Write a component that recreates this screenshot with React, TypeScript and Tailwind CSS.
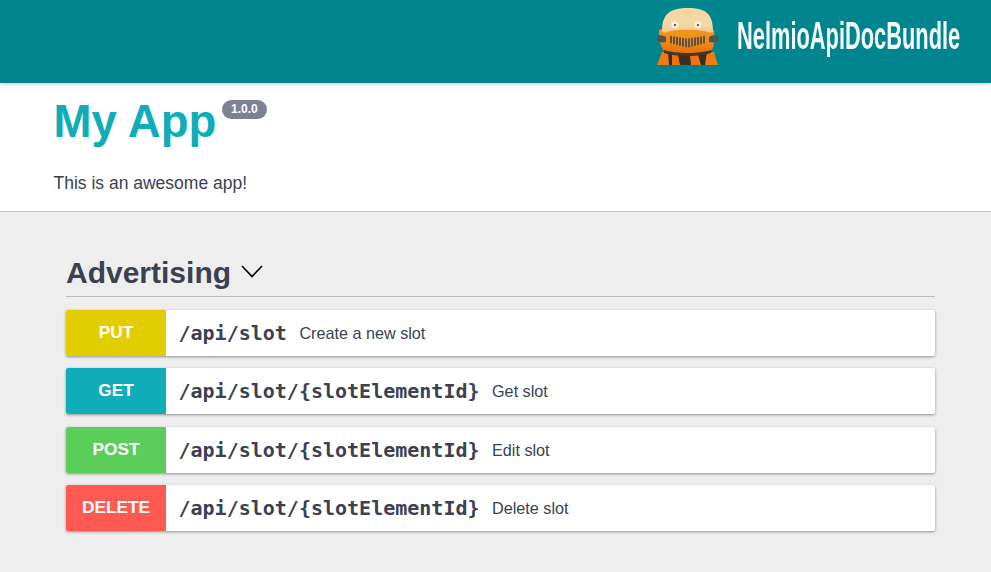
const rows = [
  { m: "PUT", c: "bg-[#e2cd00]", p: "/api/slot", d: "Create a new slot" },
  { m: "GET", c: "bg-[#10acb8]", p: "/api/slot/{slotElementId}", d: "Get slot" },
  { m: "POST", c: "bg-[#5bcd5b]", p: "/api/slot/{slotElementId}", d: "Edit slot" },
  { m: "DELETE", c: "bg-[#ff5a52]", p: "/api/slot/{slotElementId}", d: "Delete slot" },
];

function Mascot() {
  return (
    <svg width="64" height="62" viewBox="0 0 64 62" className="block blur-[0.4px]">
      <defs>
        <linearGradient id="head" x1="0" y1="0" x2="0" y2="1">
          <stop offset="0" stopColor="#f6d8a2" />
          <stop offset="0.7" stopColor="#f5d6a6" />
          <stop offset="1" stopColor="#efc384" />
        </linearGradient>
        <linearGradient id="body" x1="0" y1="0" x2="0" y2="1">
          <stop offset="0" stopColor="#f59a20" />
          <stop offset="0.6" stopColor="#f08a14" />
          <stop offset="1" stopColor="#e66f0a" />
        </linearGradient>
      </defs>
      <path d="M8 46 H56 L57 60 H7 Z" fill="#3a2e24" />
      <path d="M1 60 L6 47 H12 L13 60 Z" fill="#f47a10" />
      <path d="M16 50 H22 L24 60 H16 Z" fill="#f0720c" />
      <path d="M34 50 H42 L45 60 H35 Z" fill="#f0720c" />
      <path d="M51 47 H58 L62 60 H49 Z" fill="#f47a10" />
      <path d="M3 25 C3 36 5 42 8 46 C20 50 44 50 55 46 C58 42 59 36 58 25 C46 19 16 19 3 25 Z" fill="url(#body)" />
      <path d="M8 45 C20 49 44 49 55 45 L55 48 C44 52 20 52 8 48 Z" fill="#4a3524" />
      <path d="M1 31 C3 30 7 30 10 32 V37 C7 38 3 37 1 36 Z" fill="#55524e" />
      <path d="M62 31 C60 30 56 30 53 32 V37 C57 38 60 37 62 36 Z" fill="#55524e" />
      <path d="M6 26 C6 9 14 3 32 3 C50 3 57 9 57 26 C57 28 54 28 52 27 C42 24 20 24 11 27 C9 28 6 28 6 26 Z" fill="url(#head)" />
      <circle cx="19" cy="20" r="3.4" fill="#faf1e4" />
      <circle cx="19" cy="20" r="1.2" fill="#6a6058" />
      <circle cx="42" cy="20" r="3.4" fill="#faf1e4" />
      <circle cx="42" cy="20" r="1.2" fill="#6a6058" />
      {[14, 17, 20, 23, 26, 29, 32, 35, 38, 41, 44, 47].map((x, i) => {
        const dip = 5 - Math.abs(i - 5.5);
        return <rect key={i} x={x} y={31 + dip * 0.5} width="2" height={8 + dip * 0.3} rx="1" fill="#5e5248" />;
      })}
    </svg>
  );
}

export default function App() {
  return (
    <div className="min-h-[572px] bg-[#eeeeee] font-['Liberation_Sans',Arial,sans-serif] text-[#3b4151] overflow-hidden">
      <header className="h-[83px] bg-[#00858f] flex items-start pl-[656px] pt-[5px] gap-[17px] shadow-[0_1px_3px_rgba(0,0,0,0.25)] relative">
        <Mascot />
        <span className="font-bold text-[39px] leading-[50px] mt-[6px] text-[#f2fafa] inline-block w-[224px] whitespace-nowrap origin-left scale-x-[0.56]">
          NelmioApiDocBundle
        </span>
      </header>
      <section className="bg-white h-[129px] border-b border-[#c8c8c8] pl-[53.5px] pt-[10px]">
        <div className="flex items-start">
          <h1 className="text-[45.6px] leading-[57px] font-bold text-[#10acb8]">My App</h1>
          <span className="ml-[5.5px] mt-[7px] h-[19px] w-[45px] rounded-full bg-[#7d8293] text-white text-[12px] font-bold leading-[19px] text-center">1.0.0</span>
        </div>
        <p className="mt-[21px] text-[17.5px] leading-[24px] text-[#3b3f51]">This is an awesome app!</p>
      </section>
      <main className="ml-[66px] w-[869px] mt-[34px]">
        <div className="flex items-center h-[51px] border-b border-[#b8bac0]">
          <h2 className="text-[30px] leading-[51px] pt-[2px] font-bold text-[#3b4151]">Advertising</h2>
          <svg width="24" height="24" viewBox="0 0 24 24" fill="none" stroke="#000" strokeWidth="1.6" className="ml-[9px]">
            <path d="M2 7 L12 17.5 L22 7" />
          </svg>
        </div>
        <div className="mt-[13px] flex flex-col gap-[12.33px]">
          {rows.map((r) => (
            <div key={r.m} className="h-[46px] bg-white flex items-center rounded-[2px] shadow-[0_1px_3px_rgba(0,0,0,0.4)]">
              <div className={`${r.c} w-[100px] h-full flex items-center justify-center text-white font-bold text-[17.3px] rounded-l-[2px]`}>{r.m}</div>
              <span className="ml-[12.5px] font-['DejaVu_Sans_Mono',monospace] font-bold text-[20px] text-[#3b4151]">{r.p}</span>
              <span className="ml-[12.5px] text-[16.2px] text-[#3b4151]">{r.d}</span>
            </div>
          ))}
        </div>
      </main>
    </div>
  );
}
